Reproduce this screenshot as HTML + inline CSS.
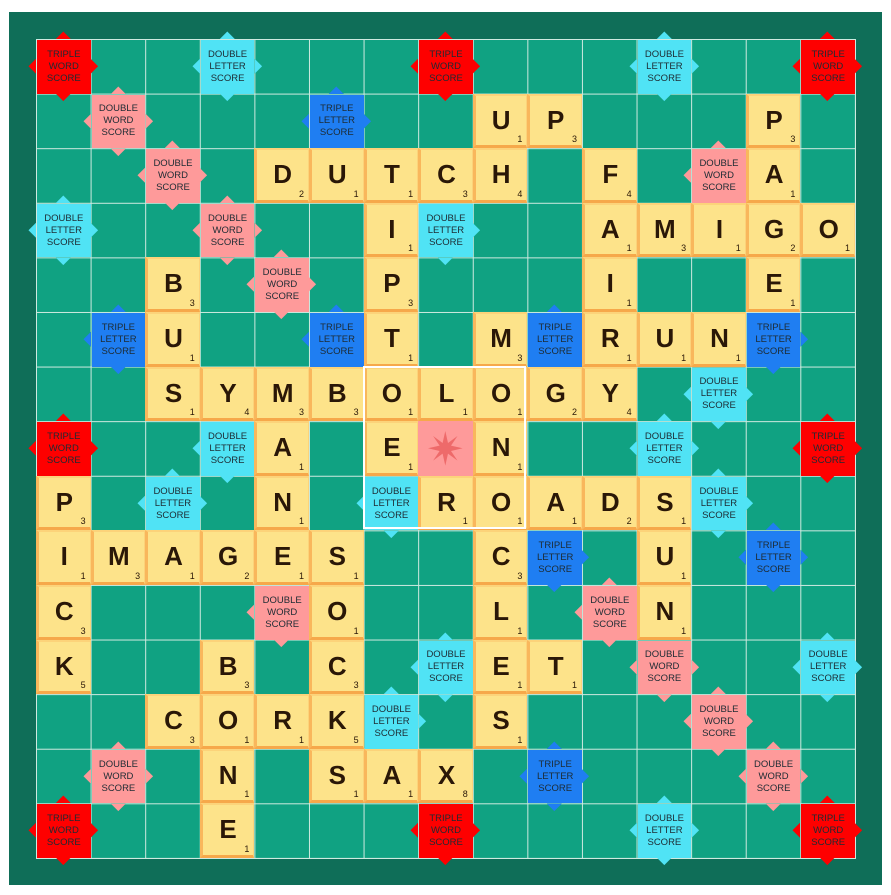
<!DOCTYPE html>
<html><head><meta charset="utf-8"><style>
html,body{margin:0;padding:0;background:#fff;width:891px;height:895px;overflow:hidden;font-family:"Liberation Sans",sans-serif}
#frame{position:absolute;left:9px;top:12px;width:873px;height:873px;background:#0f6e58}
#g{position:absolute;left:36px;top:39px;width:819px;height:819px;background-color:#10a282;
background-image:linear-gradient(to right,#cfeae0 1px,transparent 1px),linear-gradient(to bottom,#cfeae0 1px,transparent 1px);
background-size:54.6px 54.6px;border-right:1px solid #cfeae0;border-bottom:1px solid #cfeae0;box-sizing:content-box}
.p{position:absolute;width:54.6px;height:54.6px}
.p svg{position:absolute;left:-9px;top:-9px;width:72.6px;height:72.6px;z-index:1;overflow:visible}
.p span{position:absolute;left:1px;top:1px;right:0;bottom:0;z-index:2;display:flex;align-items:center;justify-content:center;text-align:center;font-size:9.5px;line-height:12px;color:#1d2b33}
.tw svg{fill:#fe0000}.tw span{background:#fe0000}
.dw svg{fill:#fe9a9a}.dw span{background:#fe9a9a}
.tl svg{fill:#1f7ef2}.tl span{background:#1f7ef2}
.dl svg{fill:#50e3f5}.dl span{background:#50e3f5}
.t{position:absolute;width:54.6px;height:54.6px;box-sizing:border-box;z-index:3;background:#fde38a;border-left:3px solid #f9b75c;border-bottom:3px solid #f6a84a;border-top:2px solid #fcd37a;border-right:1px solid #fcd37a;font-weight:bold;font-size:26px;color:#2a1707;text-align:center;line-height:48px}
.t b{position:absolute;right:4px;bottom:1px;font-size:9px;line-height:10px;font-weight:normal}
#ctr{position:absolute;left:327.6px;top:327.6px;width:163.8px;height:163.8px;border:2px solid #fff;box-sizing:border-box;z-index:5;margin:-1px 0 0 -1px}
.star{position:absolute;left:382.2px;top:382.2px;width:54.6px;height:54.6px;background:#fe9a9a;z-index:2}
</style></head><body>
<svg width="0" height="0" style="position:absolute"><defs><path id="tri" d="M28.8 9H43.8L36.3 1.5ZM28.8 63.6H43.8L36.3 71.1ZM9 28.8V43.8L1.5 36.3ZM63.6 28.8V43.8L71.1 36.3Z"/></defs></svg>
<div id="frame"></div>
<div id="g">
<!-- TW -->
<div class="p tw" style="left:0px;top:0px"><svg viewBox="0 0 72.6 72.6"><use href="#tri"/></svg><span>TRIPLE<br>WORD<br>SCORE</span></div>
<div class="p tw" style="left:382.2px;top:0px"><svg viewBox="0 0 72.6 72.6"><use href="#tri"/></svg><span>TRIPLE<br>WORD<br>SCORE</span></div>
<div class="p tw" style="left:764.4px;top:0px"><svg viewBox="0 0 72.6 72.6"><use href="#tri"/></svg><span>TRIPLE<br>WORD<br>SCORE</span></div>
<div class="p tw" style="left:0px;top:382.2px"><svg viewBox="0 0 72.6 72.6"><use href="#tri"/></svg><span>TRIPLE<br>WORD<br>SCORE</span></div>
<div class="p tw" style="left:764.4px;top:382.2px"><svg viewBox="0 0 72.6 72.6"><use href="#tri"/></svg><span>TRIPLE<br>WORD<br>SCORE</span></div>
<div class="p tw" style="left:0px;top:764.4px"><svg viewBox="0 0 72.6 72.6"><use href="#tri"/></svg><span>TRIPLE<br>WORD<br>SCORE</span></div>
<div class="p tw" style="left:382.2px;top:764.4px"><svg viewBox="0 0 72.6 72.6"><use href="#tri"/></svg><span>TRIPLE<br>WORD<br>SCORE</span></div>
<div class="p tw" style="left:764.4px;top:764.4px"><svg viewBox="0 0 72.6 72.6"><use href="#tri"/></svg><span>TRIPLE<br>WORD<br>SCORE</span></div>
<!-- DW -->
<div class="p dw" style="left:54.6px;top:54.6px"><svg viewBox="0 0 72.6 72.6"><use href="#tri"/></svg><span>DOUBLE<br>WORD<br>SCORE</span></div>
<div class="p dw" style="left:109.2px;top:109.2px"><svg viewBox="0 0 72.6 72.6"><use href="#tri"/></svg><span>DOUBLE<br>WORD<br>SCORE</span></div>
<div class="p dw" style="left:163.8px;top:163.8px"><svg viewBox="0 0 72.6 72.6"><use href="#tri"/></svg><span>DOUBLE<br>WORD<br>SCORE</span></div>
<div class="p dw" style="left:218.4px;top:218.4px"><svg viewBox="0 0 72.6 72.6"><use href="#tri"/></svg><span>DOUBLE<br>WORD<br>SCORE</span></div>
<div class="p dw" style="left:655.2px;top:109.2px"><svg viewBox="0 0 72.6 72.6"><use href="#tri"/></svg><span>DOUBLE<br>WORD<br>SCORE</span></div>
<div class="p dw" style="left:218.4px;top:546px"><svg viewBox="0 0 72.6 72.6"><use href="#tri"/></svg><span>DOUBLE<br>WORD<br>SCORE</span></div>
<div class="p dw" style="left:54.6px;top:709.8px"><svg viewBox="0 0 72.6 72.6"><use href="#tri"/></svg><span>DOUBLE<br>WORD<br>SCORE</span></div>
<div class="p dw" style="left:546px;top:546px"><svg viewBox="0 0 72.6 72.6"><use href="#tri"/></svg><span>DOUBLE<br>WORD<br>SCORE</span></div>
<div class="p dw" style="left:600.6px;top:600.6px"><svg viewBox="0 0 72.6 72.6"><use href="#tri"/></svg><span>DOUBLE<br>WORD<br>SCORE</span></div>
<div class="p dw" style="left:655.2px;top:655.2px"><svg viewBox="0 0 72.6 72.6"><use href="#tri"/></svg><span>DOUBLE<br>WORD<br>SCORE</span></div>
<div class="p dw" style="left:709.8px;top:709.8px"><svg viewBox="0 0 72.6 72.6"><use href="#tri"/></svg><span>DOUBLE<br>WORD<br>SCORE</span></div>
<!-- TL -->
<div class="p tl" style="left:273px;top:54.6px"><svg viewBox="0 0 72.6 72.6"><use href="#tri"/></svg><span>TRIPLE<br>LETTER<br>SCORE</span></div>
<div class="p tl" style="left:54.6px;top:273px"><svg viewBox="0 0 72.6 72.6"><use href="#tri"/></svg><span>TRIPLE<br>LETTER<br>SCORE</span></div>
<div class="p tl" style="left:273px;top:273px"><svg viewBox="0 0 72.6 72.6"><use href="#tri"/></svg><span>TRIPLE<br>LETTER<br>SCORE</span></div>
<div class="p tl" style="left:491.4px;top:273px"><svg viewBox="0 0 72.6 72.6"><use href="#tri"/></svg><span>TRIPLE<br>LETTER<br>SCORE</span></div>
<div class="p tl" style="left:709.8px;top:273px"><svg viewBox="0 0 72.6 72.6"><use href="#tri"/></svg><span>TRIPLE<br>LETTER<br>SCORE</span></div>
<div class="p tl" style="left:491.4px;top:491.4px"><svg viewBox="0 0 72.6 72.6"><use href="#tri"/></svg><span>TRIPLE<br>LETTER<br>SCORE</span></div>
<div class="p tl" style="left:709.8px;top:491.4px"><svg viewBox="0 0 72.6 72.6"><use href="#tri"/></svg><span>TRIPLE<br>LETTER<br>SCORE</span></div>
<div class="p tl" style="left:491.4px;top:709.8px"><svg viewBox="0 0 72.6 72.6"><use href="#tri"/></svg><span>TRIPLE<br>LETTER<br>SCORE</span></div>
<!-- DL -->
<div class="p dl" style="left:163.8px;top:0px"><svg viewBox="0 0 72.6 72.6"><use href="#tri"/></svg><span>DOUBLE<br>LETTER<br>SCORE</span></div>
<div class="p dl" style="left:600.6px;top:0px"><svg viewBox="0 0 72.6 72.6"><use href="#tri"/></svg><span>DOUBLE<br>LETTER<br>SCORE</span></div>
<div class="p dl" style="left:0px;top:163.8px"><svg viewBox="0 0 72.6 72.6"><use href="#tri"/></svg><span>DOUBLE<br>LETTER<br>SCORE</span></div>
<div class="p dl" style="left:382.2px;top:163.8px"><svg viewBox="0 0 72.6 72.6"><use href="#tri"/></svg><span>DOUBLE<br>LETTER<br>SCORE</span></div>
<div class="p dl" style="left:655.2px;top:327.6px"><svg viewBox="0 0 72.6 72.6"><use href="#tri"/></svg><span>DOUBLE<br>LETTER<br>SCORE</span></div>
<div class="p dl" style="left:163.8px;top:382.2px"><svg viewBox="0 0 72.6 72.6"><use href="#tri"/></svg><span>DOUBLE<br>LETTER<br>SCORE</span></div>
<div class="p dl" style="left:600.6px;top:382.2px"><svg viewBox="0 0 72.6 72.6"><use href="#tri"/></svg><span>DOUBLE<br>LETTER<br>SCORE</span></div>
<div class="p dl" style="left:109.2px;top:436.8px"><svg viewBox="0 0 72.6 72.6"><use href="#tri"/></svg><span>DOUBLE<br>LETTER<br>SCORE</span></div>
<div class="p dl" style="left:327.6px;top:436.8px"><svg viewBox="0 0 72.6 72.6"><use href="#tri"/></svg><span>DOUBLE<br>LETTER<br>SCORE</span></div>
<div class="p dl" style="left:655.2px;top:436.8px"><svg viewBox="0 0 72.6 72.6"><use href="#tri"/></svg><span>DOUBLE<br>LETTER<br>SCORE</span></div>
<div class="p dl" style="left:382.2px;top:600.6px"><svg viewBox="0 0 72.6 72.6"><use href="#tri"/></svg><span>DOUBLE<br>LETTER<br>SCORE</span></div>
<div class="p dl" style="left:764.4px;top:600.6px"><svg viewBox="0 0 72.6 72.6"><use href="#tri"/></svg><span>DOUBLE<br>LETTER<br>SCORE</span></div>
<div class="p dl" style="left:327.6px;top:655.2px"><svg viewBox="0 0 72.6 72.6"><use href="#tri"/></svg><span>DOUBLE<br>LETTER<br>SCORE</span></div>
<div class="p dl" style="left:600.6px;top:764.4px"><svg viewBox="0 0 72.6 72.6"><use href="#tri"/></svg><span>DOUBLE<br>LETTER<br>SCORE</span></div>
<!-- star -->
<div class="star"><svg width="54.6" height="54.6" viewBox="0 0 54.6 54.6"><polygon fill="#ee6a6a" points="27.3,10 30,22 39.5,15 33,24.6 44.6,27.3 33,30 39.5,39.6 30,32.6 27.3,44.6 24.6,32.6 15.1,39.6 21.6,30 10,27.3 21.6,24.6 15.1,15 24.6,22"/></svg></div>
<!-- tiles -->
<div class="t" style="left:436.8px;top:54.6px">U<b>1</b></div>
<div class="t" style="left:491.4px;top:54.6px">P<b>3</b></div>
<div class="t" style="left:709.8px;top:54.6px">P<b>3</b></div>
<div class="t" style="left:218.4px;top:109.2px">D<b>2</b></div>
<div class="t" style="left:273px;top:109.2px">U<b>1</b></div>
<div class="t" style="left:327.6px;top:109.2px">T<b>1</b></div>
<div class="t" style="left:382.2px;top:109.2px">C<b>3</b></div>
<div class="t" style="left:436.8px;top:109.2px">H<b>4</b></div>
<div class="t" style="left:546px;top:109.2px">F<b>4</b></div>
<div class="t" style="left:709.8px;top:109.2px">A<b>1</b></div>
<div class="t" style="left:327.6px;top:163.8px">I<b>1</b></div>
<div class="t" style="left:546px;top:163.8px">A<b>1</b></div>
<div class="t" style="left:600.6px;top:163.8px">M<b>3</b></div>
<div class="t" style="left:655.2px;top:163.8px">I<b>1</b></div>
<div class="t" style="left:709.8px;top:163.8px">G<b>2</b></div>
<div class="t" style="left:764.4px;top:163.8px">O<b>1</b></div>
<div class="t" style="left:109.2px;top:218.4px">B<b>3</b></div>
<div class="t" style="left:327.6px;top:218.4px">P<b>3</b></div>
<div class="t" style="left:546px;top:218.4px">I<b>1</b></div>
<div class="t" style="left:709.8px;top:218.4px">E<b>1</b></div>
<div class="t" style="left:109.2px;top:273px">U<b>1</b></div>
<div class="t" style="left:327.6px;top:273px">T<b>1</b></div>
<div class="t" style="left:436.8px;top:273px">M<b>3</b></div>
<div class="t" style="left:546px;top:273px">R<b>1</b></div>
<div class="t" style="left:600.6px;top:273px">U<b>1</b></div>
<div class="t" style="left:655.2px;top:273px">N<b>1</b></div>
<div class="t" style="left:109.2px;top:327.6px">S<b>1</b></div>
<div class="t" style="left:163.8px;top:327.6px">Y<b>4</b></div>
<div class="t" style="left:218.4px;top:327.6px">M<b>3</b></div>
<div class="t" style="left:273px;top:327.6px">B<b>3</b></div>
<div class="t" style="left:327.6px;top:327.6px">O<b>1</b></div>
<div class="t" style="left:382.2px;top:327.6px">L<b>1</b></div>
<div class="t" style="left:436.8px;top:327.6px">O<b>1</b></div>
<div class="t" style="left:491.4px;top:327.6px">G<b>2</b></div>
<div class="t" style="left:546px;top:327.6px">Y<b>4</b></div>
<div class="t" style="left:218.4px;top:382.2px">A<b>1</b></div>
<div class="t" style="left:327.6px;top:382.2px">E<b>1</b></div>
<div class="t" style="left:436.8px;top:382.2px">N<b>1</b></div>
<div class="t" style="left:0px;top:436.8px">P<b>3</b></div>
<div class="t" style="left:218.4px;top:436.8px">N<b>1</b></div>
<div class="t" style="left:382.2px;top:436.8px">R<b>1</b></div>
<div class="t" style="left:436.8px;top:436.8px">O<b>1</b></div>
<div class="t" style="left:491.4px;top:436.8px">A<b>1</b></div>
<div class="t" style="left:546px;top:436.8px">D<b>2</b></div>
<div class="t" style="left:600.6px;top:436.8px">S<b>1</b></div>
<div class="t" style="left:0px;top:491.4px">I<b>1</b></div>
<div class="t" style="left:54.6px;top:491.4px">M<b>3</b></div>
<div class="t" style="left:109.2px;top:491.4px">A<b>1</b></div>
<div class="t" style="left:163.8px;top:491.4px">G<b>2</b></div>
<div class="t" style="left:218.4px;top:491.4px">E<b>1</b></div>
<div class="t" style="left:273px;top:491.4px">S<b>1</b></div>
<div class="t" style="left:436.8px;top:491.4px">C<b>3</b></div>
<div class="t" style="left:600.6px;top:491.4px">U<b>1</b></div>
<div class="t" style="left:0px;top:546px">C<b>3</b></div>
<div class="t" style="left:273px;top:546px">O<b>1</b></div>
<div class="t" style="left:436.8px;top:546px">L<b>1</b></div>
<div class="t" style="left:600.6px;top:546px">N<b>1</b></div>
<div class="t" style="left:0px;top:600.6px">K<b>5</b></div>
<div class="t" style="left:163.8px;top:600.6px">B<b>3</b></div>
<div class="t" style="left:273px;top:600.6px">C<b>3</b></div>
<div class="t" style="left:436.8px;top:600.6px">E<b>1</b></div>
<div class="t" style="left:491.4px;top:600.6px">T<b>1</b></div>
<div class="t" style="left:109.2px;top:655.2px">C<b>3</b></div>
<div class="t" style="left:163.8px;top:655.2px">O<b>1</b></div>
<div class="t" style="left:218.4px;top:655.2px">R<b>1</b></div>
<div class="t" style="left:273px;top:655.2px">K<b>5</b></div>
<div class="t" style="left:436.8px;top:655.2px">S<b>1</b></div>
<div class="t" style="left:163.8px;top:709.8px">N<b>1</b></div>
<div class="t" style="left:273px;top:709.8px">S<b>1</b></div>
<div class="t" style="left:327.6px;top:709.8px">A<b>1</b></div>
<div class="t" style="left:382.2px;top:709.8px">X<b>8</b></div>
<div class="t" style="left:163.8px;top:764.4px">E<b>1</b></div>
<div id="ctr"></div>
</div>
</body></html>
